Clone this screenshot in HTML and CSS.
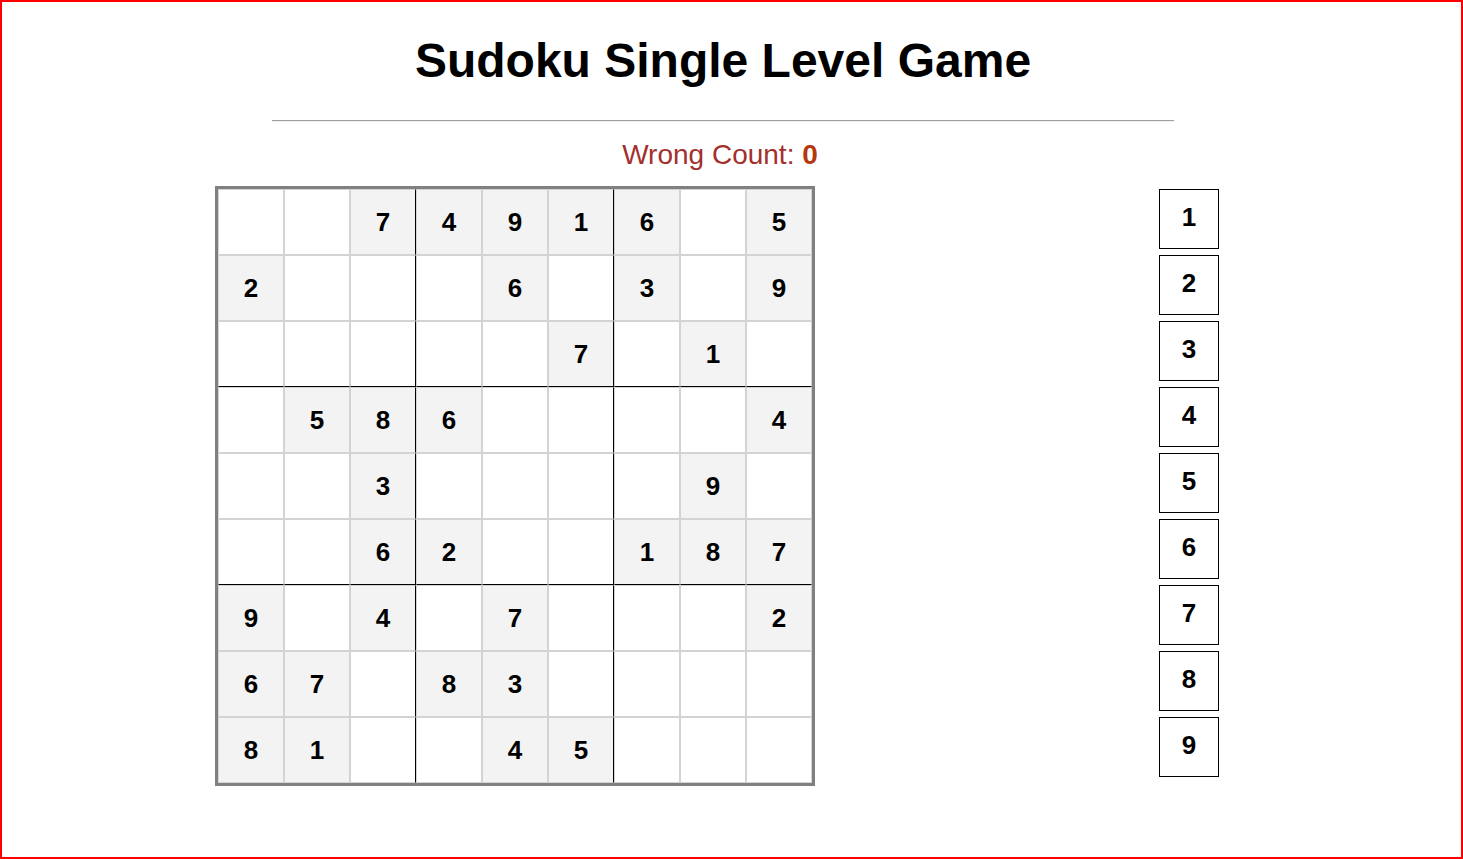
FILE: index.html
```html
<!DOCTYPE html>
<html lang="en">
<head>
<meta charset="utf-8">
<title>Sudoku Single Level Game</title>
<link rel="stylesheet" href="styles.css">
</head>
<body>
<div class="page">
  <h1 class="title">Sudoku Single Level Game</h1>
  <hr class="rule">
  <p class="wrong">Wrong Count: <span class="wrong-num">0</span></p>
  <div class="game">
    <div class="board">
      <div class="tile"></div><div class="tile"></div><div class="tile given vline">7</div><div class="tile given">4</div><div class="tile given">9</div><div class="tile given vline">1</div><div class="tile given">6</div><div class="tile"></div><div class="tile given">5</div>
      <div class="tile given">2</div><div class="tile"></div><div class="tile vline"></div><div class="tile"></div><div class="tile given">6</div><div class="tile vline"></div><div class="tile given">3</div><div class="tile"></div><div class="tile given">9</div>
      <div class="tile hline"></div><div class="tile hline"></div><div class="tile hline vline"></div><div class="tile hline"></div><div class="tile hline"></div><div class="tile given hline vline">7</div><div class="tile hline"></div><div class="tile given hline">1</div><div class="tile hline"></div>
      <div class="tile"></div><div class="tile given">5</div><div class="tile given vline">8</div><div class="tile given">6</div><div class="tile"></div><div class="tile vline"></div><div class="tile"></div><div class="tile"></div><div class="tile given">4</div>
      <div class="tile"></div><div class="tile"></div><div class="tile given vline">3</div><div class="tile"></div><div class="tile"></div><div class="tile vline"></div><div class="tile"></div><div class="tile given">9</div><div class="tile"></div>
      <div class="tile hline"></div><div class="tile hline"></div><div class="tile given hline vline">6</div><div class="tile given hline">2</div><div class="tile hline"></div><div class="tile hline vline"></div><div class="tile given hline">1</div><div class="tile given hline">8</div><div class="tile given hline">7</div>
      <div class="tile given">9</div><div class="tile"></div><div class="tile given vline">4</div><div class="tile"></div><div class="tile given">7</div><div class="tile vline"></div><div class="tile"></div><div class="tile"></div><div class="tile given">2</div>
      <div class="tile given">6</div><div class="tile given">7</div><div class="tile vline"></div><div class="tile given">8</div><div class="tile given">3</div><div class="tile vline"></div><div class="tile"></div><div class="tile"></div><div class="tile"></div>
      <div class="tile given">8</div><div class="tile given">1</div><div class="tile vline"></div><div class="tile"></div><div class="tile given">4</div><div class="tile given vline">5</div><div class="tile"></div><div class="tile"></div><div class="tile"></div>
    </div>
    <div class="digits">
      <div class="digit">1</div>
      <div class="digit">2</div>
      <div class="digit">3</div>
      <div class="digit">4</div>
      <div class="digit">5</div>
      <div class="digit">6</div>
      <div class="digit">7</div>
      <div class="digit">8</div>
      <div class="digit">9</div>
    </div>
  </div>
</div>
</body>
</html>
```

FILE: styles.css
```css
html, body {
  margin: 0;
  padding: 0;
}

body {
  box-sizing: border-box;
  height: 859px;
  border: 2px solid #ff0000;
  background: #ffffff;
  font-family: "Liberation Sans", Arial, sans-serif;
  color: #000000;
  overflow: hidden;
}

.page {
  padding-right: 17px;
}

.title {
  margin: 31px 0 0;
  font-size: 48px;
  line-height: 56px;
  font-weight: bold;
  text-align: center;
}

.rule {
  width: 902px;
  margin: 31px auto 0;
  border: 0;
  border-top: 1px solid #a0a0a0;
  border-bottom: 1px solid #eeeeee;
  height: 0;
}

.wrong {
  margin: 16px 0 0;
  padding-right: 6px;
  font-size: 28px;
  line-height: 34px;
  text-align: center;
  color: #a3302c;
}

.wrong-num {
  font-weight: bold;
  color: #b3380c;
}

.game {
  display: flex;
  align-items: flex-start;
  margin-top: 14px;
  padding-left: 213px;
}

.board {
  display: grid;
  grid-template-columns: repeat(9, 66px);
  grid-template-rows: repeat(9, 66px);
  border: 3px solid #808080;
}

.tile {
  box-sizing: border-box;
  width: 66px;
  height: 66px;
  border: 1px solid #d3d3d3;
  display: flex;
  align-items: center;
  justify-content: center;
  font-size: 26px;
  font-weight: bold;
}

.given {
  background: #f3f3f3;
}

.vline {
  border-right: 1px solid #000000;
}

.hline {
  border-bottom: 1px solid #000000;
}

.digits {
  display: flex;
  flex-direction: column;
  gap: 6px;
  margin-top: 3px;
  margin-left: 344px;
}

.digit {
  box-sizing: border-box;
  width: 60px;
  height: 60px;
  border: 1px solid #000000;
  display: flex;
  align-items: center;
  justify-content: center;
  font-size: 26px;
  font-weight: bold;
  padding-bottom: 3px;
}
```
